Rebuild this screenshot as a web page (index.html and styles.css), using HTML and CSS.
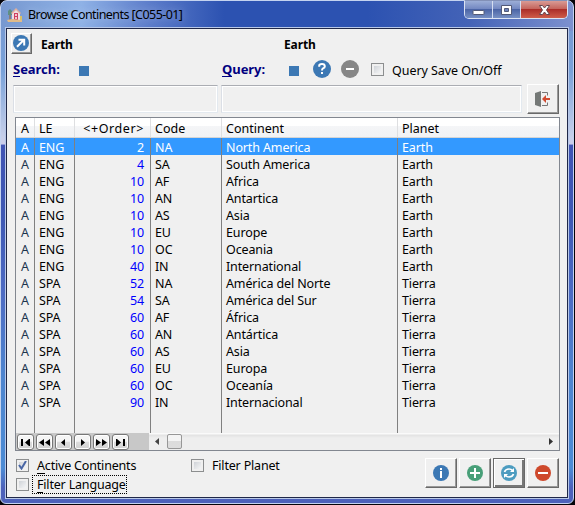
FILE: index.html
```
<!DOCTYPE html>
<html lang="en">
<head>
<meta charset="utf-8">
<title>Browse Continents</title>
<link rel="stylesheet" href="styles.css">
</head>
<body>
<div class="window">
  <header class="titlebar">
    <svg class="app-icon" width="16" height="16" viewBox="0 0 16 16"><path d="M2 6h2v7H2z" fill="#8b7d78"/><path d="M1 4l2-2 2 2v4H1z" fill="#5f8f84"/><path d="M5 6l4-4 4 4v7H5z" fill="#f0dfe2"/><path d="M4 6l5-5 5 5-1 1-4-4-4 4z" fill="#e0b09c"/><path d="M7 6h4v7H7z" fill="#cf3f62"/><path d="M8 7h2v2H8zM8 10h2v2H8z" fill="#f3c9ce"/><path d="M0 13l5-1 10 1v2H1z" fill="#e0bb8a"/><path d="M13 9h2v4h-2z" fill="#d9c267"/></svg>
    <span class="title">Browse Continents [C055-01]</span>
    <div class="controls">
      <span class="control"><svg width="13" height="12" viewBox="0 0 13 12"><rect x="1" y="6.5" width="11" height="4" rx=".5" fill="#fff" stroke="#535a77"/></svg></span>
      <span class="control"><svg width="13" height="12" viewBox="0 0 13 12"><path d="M1.500 1.500h10v9h-10z" fill="#fff" stroke="#535a77"/><path d="M4.500 4.500h4v3h-4z" fill="#6e84bd" stroke="#535a77"/></svg></span>
      <span class="control close"><svg width="13" height="12" viewBox="0 0 13 12"><path d="M1.500 1.500h3l2 2.500 2-2.500h3L8.500 6l3 4.500h-3L6.500 8l-2 2.500h-3L4.500 6z" fill="#fff" stroke="#65454f"/></svg></span>
    </div>
  </header>
  <main class="client">
    <div class="context">
      <button class="tool small"><svg width="16" height="16" viewBox="0 0 16 16"><circle cx="8" cy="8" r="8" fill="#3c78b4"/><path d="M4 11.800l6-6M5.500 4.800h5.700v5.700" fill="none" stroke="#fff" stroke-width="2"/></svg></button>
      <b class="planet-a">Earth</b>
      <b class="planet-b">Earth</b>
    </div>
    <div class="query">
      <span class="label search"><u>S</u>earch:</span><i class="square"></i>
      <span class="label find"><u>Q</u>uery:</span><i class="square"></i>
      <svg class="help" width="18" height="18" viewBox="0 0 18 18"><circle cx="9" cy="9" r="9" fill="#3c78b4"/><path d="M6.200 6.700V5.800Q6.200 4 9 4t2.800 2.400Q11.800 7.700 10 8.400Q9 8.900 9 10.500" fill="none" stroke="#fff" stroke-width="2"/><path d="M8 12h2v2H8z" fill="#fff"/></svg>
      <svg class="clear" width="18" height="18" viewBox="0 0 18 18"><circle cx="9" cy="9" r="9" fill="#868686"/><path d="M5 8h8v2H5z" fill="#fff"/></svg>
      <i class="check"></i><span class="save">Query Save On/Off</span>
    </div>
    <div class="fields">
      <div class="field first"></div><div class="field second"></div>
      <button class="tool exit"><svg width="16" height="18" viewBox="0 0 16 18"><path d="M0 3l6-2v16l-6-2z" fill="#747876"/><path d="M7 2.500h5.500v3M7 15.500h5.500v-3" fill="none" stroke="#777" stroke-width="1"/><path d="M7 9l4-4v3h4v2h-4v3z" fill="#d04a30"/></svg></button>
    </div>
    <section class="grid">
      <div class="row head"><span>A</span><span>LE</span><span>&lt;+Order&gt;</span><span>Code</span><span>Continent</span><span>Planet</span></div>
      <div class="row selected"><span>A</span><span>ENG</span><span>2</span><span>NA</span><span>North America</span><span>Earth</span></div>
      <div class="row"><span>A</span><span>ENG</span><span>4</span><span>SA</span><span>South America</span><span>Earth</span></div>
      <div class="row"><span>A</span><span>ENG</span><span>10</span><span>AF</span><span>Africa</span><span>Earth</span></div>
      <div class="row"><span>A</span><span>ENG</span><span>10</span><span>AN</span><span>Antartica</span><span>Earth</span></div>
      <div class="row"><span>A</span><span>ENG</span><span>10</span><span>AS</span><span>Asia</span><span>Earth</span></div>
      <div class="row"><span>A</span><span>ENG</span><span>10</span><span>EU</span><span>Europe</span><span>Earth</span></div>
      <div class="row"><span>A</span><span>ENG</span><span>10</span><span>OC</span><span>Oceania</span><span>Earth</span></div>
      <div class="row"><span>A</span><span>ENG</span><span>40</span><span>IN</span><span>International</span><span>Earth</span></div>
      <div class="row"><span>A</span><span>SPA</span><span>52</span><span>NA</span><span>América del Norte</span><span>Tierra</span></div>
      <div class="row"><span>A</span><span>SPA</span><span>54</span><span>SA</span><span>América del Sur</span><span>Tierra</span></div>
      <div class="row"><span>A</span><span>SPA</span><span>60</span><span>AF</span><span>África</span><span>Tierra</span></div>
      <div class="row"><span>A</span><span>SPA</span><span>60</span><span>AN</span><span>Antártica</span><span>Tierra</span></div>
      <div class="row"><span>A</span><span>SPA</span><span>60</span><span>AS</span><span>Asia</span><span>Tierra</span></div>
      <div class="row"><span>A</span><span>SPA</span><span>60</span><span>EU</span><span>Europa</span><span>Tierra</span></div>
      <div class="row"><span>A</span><span>SPA</span><span>60</span><span>OC</span><span>Oceanía</span><span>Tierra</span></div>
      <div class="row"><span>A</span><span>SPA</span><span>90</span><span>IN</span><span>Internacional</span><span>Tierra</span></div>
      <div class="row filler"><span></span><span></span><span></span><span></span><span></span><span></span></div>
      <div class="navigator">
        <div class="nav-buttons">
          <button><svg width="11" height="7" viewBox="0 0 11 7"><path d="M1 0h2v7H1zM9 0v7L5 3.500zM9 0h1v7H9z"/></svg></button>
          <button><svg width="11" height="7" viewBox="0 0 11 7"><path d="M5 0v7L0 3.500zM11 0v7L6 3.500z"/></svg></button>
          <button><svg width="11" height="7" viewBox="0 0 11 7"><path d="M7 0v7L3 3.500z"/></svg></button>
          <button><svg width="11" height="7" viewBox="0 0 11 7"><path d="M4 0v7l4-3.500z"/></svg></button>
          <button><svg width="11" height="7" viewBox="0 0 11 7"><path d="M0 0v7l5-3.500zM6 0v7l5-3.500z"/></svg></button>
          <button><svg width="11" height="7" viewBox="0 0 11 7"><path d="M1 0h1v7H1zM2 0v7l4-3.500zM8 0h2v7H8z"/></svg></button>
        </div>
        <div class="scrollbar">
          <svg width="4" height="7" viewBox="0 0 4 7"><path d="M4 0v7L0 3.500z" fill="#444"/></svg>
          <i class="thumb"></i>
          <svg class="right" width="4" height="7" viewBox="0 0 4 7"><path d="M0 0v7l4-3.500z" fill="#333"/></svg>
        </div>
      </div>
    </section>
    <footer class="footer">
      <div class="filters">
        <label><i class="check"><svg width="9" height="9" viewBox="0 0 9 9"><path d="M1 4l2.500 3.500L8 0" fill="none" stroke="#4966a5" stroke-width="2"/></svg></i><span><u>A</u>ctive Continents</span></label>
        <label><i class="check"></i><span class="focused"><u>F</u>ilter Language</span></label>
      </div>
      <label class="planet-filter"><i class="check"></i><span>Filter Planet</span></label>
      <div class="actions">
        <button class="tool"><svg width="16" height="16" viewBox="0 0 16 16"><circle cx="8" cy="8" r="8" fill="#3c78b4"/><path d="M7 3h2v2H7zM7 6h2v7H7z" fill="#fff"/></svg></button>
        <button class="tool"><svg width="16" height="16" viewBox="0 0 16 16"><circle cx="8" cy="8" r="8" fill="#489f78"/><path d="M7 3h2v4h4v2H9v4H7V9H3V7h4z" fill="#fff"/></svg></button>
        <button class="tool default"><svg width="16" height="16" viewBox="0 0 16 16"><circle cx="8" cy="8" r="8" fill="#4c9cc0"/><path d="M3.500 7Q4.500 4 8 4q2.200 0 3.500 1.500M12.500 9q-1 3-4.500 3-2.200 0-3.500-1.500" fill="none" stroke="#fff" stroke-width="1.700"/><path d="M13 3v4H9zM3 13V9h4z" fill="#fff"/></svg></button>
        <button class="tool"><svg width="16" height="16" viewBox="0 0 16 16"><circle cx="8" cy="8" r="8" fill="#ce492c"/><path d="M3 7h10v2H3z" fill="#fff"/></svg></button>
      </div>
    </footer>
  </main>
</div>
</body>
</html>
```
FILE: styles.css
```
* { box-sizing: border-box; }
body { margin: 0; background: #050409; font: 12.5px/17px "Noto Sans", sans-serif; letter-spacing: -.12px; color: #000; overflow: hidden; }
svg { display: block; flex: none; }
button { font: inherit; padding: 0; margin: 0; }
u { text-decoration: none; border-bottom: 1px solid currentColor; display: inline-block; line-height: 14px; }
.window { width: 574px; height: 504px; border: 1px solid #c4d3f0; border-radius: 7px 7px 6px 6px; padding: 0 4px 4px; display: flex; flex-direction: column;
  background: linear-gradient(90deg, #7798d0 0, #8fb2e6 14%, #5c7cca 26%, #2c52b1 39%, #2c52b1 64%, #4463b7 82%, #7d91cf) top / 100% 30px no-repeat,
  linear-gradient(#7795cf, #79a2d9 14%, #c8d0ea 37%, #cbcdeb 37.800%, #4054b4 38%, #3e58b4 43%, #4d6bc3 58%, #4e85cf 75%, #4c8bd5 93%, #4d61ba 97%); 
  background: linear-gradient(90deg, #7798d0 0, #8fb2e6 14%, #5c7cca 26%, #2c52b1 39%, #2c52b1 64%, #4463b7 82%, #7d91cf) top / 100% 30px no-repeat,
  linear-gradient(#7795cf, #79a2d9 14%, #c8d0ea 27.300%, #cbcdeb 28.500%, #4054b4 28.700%, #3e58b4 43%, #4d6bc3 58%, #4e85cf 75%, #4c8bd5 93%, #4d61ba 97%); }
.titlebar { height: 26px; display: flex; flex: none; align-items: flex-start; padding: 5px 0 0 2px; }
.app-icon { margin-top: 1px; }
.title { margin: 0 0 0 5px; letter-spacing: -.56px; white-space: nowrap; text-shadow: 0 0 8px #cfe0ffaa; }
.controls { display: flex; margin: -6px 1px 0 auto; height: 19px; border: 1px solid #dce3f3; border-top-color: #8290b6; border-radius: 0 0 5px 5px; overflow: hidden; }
.control { width: 28px; display: flex; align-items: center; justify-content: center; border-right: 1px solid #d4ddf0; background: linear-gradient(#9caed7, #7489c2 45%, #4c65a6 50%, #7790c4); }
.control.close { width: 46px; border: 0; background: linear-gradient(#d99b95, #c5655d 45%, #ab2e29 50%, #cf5d4a); }
.client { flex: 1; border: 1px solid #b8c8e8; outline: 1px solid #202848; outline-offset: -2px; background: #f0f0f0; padding: 5px 4px 0 5px; display: flex; flex-direction: column; }
.tool { display: flex; align-items: center; justify-content: center; width: 32px; height: 30px; flex: none; background: #f0f0f0; border: 1px solid; border-color: #fff #696969 #696969 #fff; box-shadow: inset -1px -1px #999; }
.small { width: 21px; height: 21px; }
.small svg { margin-left: -1px; margin-top: -1px; }
.context { display: flex; height: 21px; align-items: center; font-size: 12px; }
.context b { margin-top: 2px; letter-spacing: -.1px; }
.planet-a { width: 243px; margin-left: 9px; }
.query { display: flex; align-items: center; height: 28px; margin: 1px 0 0 1px; }
.label { color: #000080; font-weight: 700; font-size: 13px; width: 66px; margin-left: 1px; letter-spacing: -.05px; }
.square { width: 10px; height: 10px; background: #3c78b4; margin-top: 3px; }
.find { margin-left: 133px; width: 67px; }
.help { margin-left: 14px; }
.clear { margin-left: 10px; }
.check { width: 13px; height: 13px; flex: none; display: flex; align-items: center; justify-content: center; border: 1px solid #8c8e8f; background: linear-gradient(135deg, #c5c9cf, #fff); box-shadow: inset 0 0 0 2px #f0f0f0; }
.query .check { margin-left: 12px; }
.save { margin-left: 8px; margin-top: 2px; white-space: nowrap; letter-spacing: -.05px; }
.fields { display: flex; height: 30px; align-items: center; margin-top: 1px; }
.field { height: 28px; border: 1px solid; border-color: #abadb3 #e3e9ef #e3e9ef #dbdfe6; box-shadow: inset 0 0 0 1px #fff; }
.first { width: 205px; margin-left: 2px; }
.second { width: 301px; margin-left: 3px; }
.exit { margin-left: 5px; }
.grid { width: 545px; height: 334px; flex: none; margin: 3px 0 0 4px; border: 1px solid #828790; display: flex; flex-direction: column; }
.row { display: grid; grid-template: 100% / 19px 40px 76px 71px 176px 161px; height: 17px; flex: none; }
.row span { border-right: 1px solid #808080; padding-left: 4px; white-space: nowrap; line-height: 19.500px; }
.row span:last-child { border: 0; }
.row span:first-child { padding-left: 5px; color: #1c344e; }
.row span:nth-child(3) { text-align: right; padding-right: 6px; color: #00f; }
.row.head { height: 20px; background: linear-gradient(#fff 40%, #f4f5f7 45%, #f2f3f5); border-bottom: 1px solid #d5d5d5; }
.row.head span { border-color: #dedfe1; line-height: 21px; color: #000; letter-spacing: 0; }
.row.head span:nth-child(3) { letter-spacing: .6px; }
.row.selected { background: #3399ff; }
.row.selected span { color: #fff; }
.row.filler { height: 23px; }
.navigator { display: flex; flex: none; height: 17px; background: #c8c8c8; }
.nav-buttons { width: 133px; display: flex; gap: 2px; padding: 1px 1px 0; }
.nav-buttons button { width: 17px; height: 16px; border: 1px solid #777; border-radius: 3px; background: linear-gradient(#f5f5f5 45%, #ddd 50%, #d2d2d2); display: flex; align-items: center; justify-content: center; box-shadow: inset 0 0 0 1px #fff; }
.scrollbar { flex: 1; display: flex; align-items: center; background: linear-gradient(#fafafa 1px, #e2e2e2 2px, #eee 5px); padding: 0 6px; }
.thumb { width: 15px; height: 15px; margin-left: 8px; border: 1px solid #979797; border-radius: 2px; background: linear-gradient(#f4f4f4 45%, #dcdcdc 50%, #ddd); }
.right { margin-left: auto; }
.footer { display: flex; padding: 5px 0 0 5px; }
.footer label { display: flex; align-items: center; height: 19px; white-space: nowrap; letter-spacing: -.18px; }
.filters { width: 175px; }
.filters span, .planet-filter span { margin-left: 8px; }
.filters .focused { border: 1px dotted #000; height: 19px; line-height: 17px; margin-left: 3px; padding: 0 0 0 4px; }
.actions { display: flex; gap: 2px; margin: 2px 0 0 auto; padding-right: 5px; }
.actions .default { border: 1px solid #696969; box-shadow: inset 1px 1px #fff, inset -2px -2px #777; }
```
